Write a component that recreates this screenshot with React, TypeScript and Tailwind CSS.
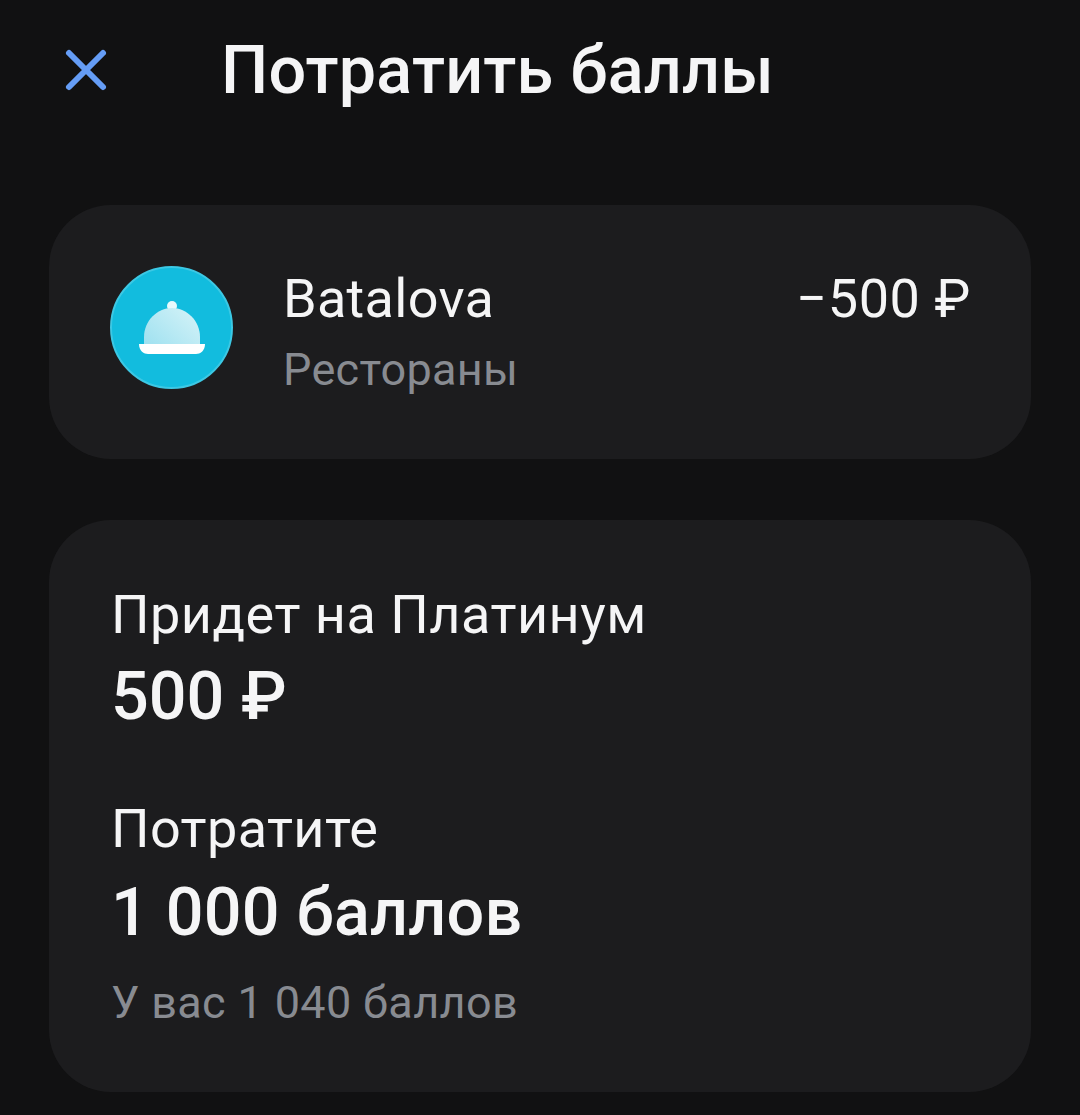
export default function App() {
  return (
    <div className="w-[1080px] h-[1115px] bg-[#111112] overflow-hidden font-['Roboto','Noto_Sans',sans-serif] text-[#f5f5f6]">
      <header className="h-[144px] pl-[64px] flex items-start">
        <svg width="44" height="44" viewBox="0 0 44 44" className="mt-[48px] shrink-0" fill="none" stroke="#659df6" strokeWidth="6" strokeLinecap="round">
          <path d="M5 5 L39 39 M39 5 L5 39" />
        </svg>
        <h1 className="ml-[113px] mt-[30px] text-[66.5px] leading-[80px] font-medium tracking-[0.2px]">Потратить баллы</h1>
      </header>
      <div className="px-[49px] flex flex-col gap-[61px] mt-[61px]">
        <section className="h-[254px] rounded-[62px] bg-[#1c1c1e] pl-[61px] pr-[60px] flex items-start">
          <div className="mt-[61px] shrink-0 w-[123px] h-[123px] rounded-full bg-[#12bcde] border-2 border-[#3cc8e4] flex items-center justify-center">
            <svg width="68" height="54" viewBox="0 0 68 54">
              <defs>
                <linearGradient id="d" x1="0" y1="1" x2="1" y2="0.3">
                  <stop offset="0" stopColor="#9fe1f0" />
                  <stop offset="1" stopColor="#d0f1f7" />
                </linearGradient>
              </defs>
              <circle cx="34" cy="5" r="5" fill="#e8f9fc" />
              <path d="M6 43 V36 C6 20 19 7 34 7 C49 7 62 20 62 36 V43 Z" fill="url(#d)" />
              <path d="M1 43 H67 C67 50 62 53 58 53 H10 C6 53 1 50 1 43 Z" fill="#fff" />
            </svg>
          </div>
          <div className="ml-[50px] mt-[64px] flex-1 flex justify-between">
            <div>
              <div className="text-[54px] leading-[60px] tracking-[0.3px]">Batalova</div>
              <div className="text-[45px] leading-[50px] mt-[16px] text-[#888b91] tracking-[0.3px]">Рестораны</div>
            </div>
            <div className="text-[54px] leading-[60px] tracking-[0.6px]">−500 ₽</div>
          </div>
        </section>
        <section className="h-[572px] rounded-[62px] bg-[#1c1c1e] pl-[62px] pt-[65px]">
          <div className="text-[54px] leading-[60px] tracking-[0.5px]">Придет на Платинум</div>
          <div className="text-[66.5px] leading-[76px] mt-[13px] font-medium">500 ₽</div>
          <div className="text-[54px] leading-[60px] mt-[65px] tracking-[0.4px]">Потратите</div>
          <div className="text-[66.5px] leading-[76px] mt-[15px] font-medium tracking-[0.2px]">1 000 баллов</div>
          <div className="text-[45px] leading-[50px] mt-[28px] text-[#888b91] tracking-[0.35px]">У вас 1 040 баллов</div>
        </section>
      </div>
    </div>
  );
}
